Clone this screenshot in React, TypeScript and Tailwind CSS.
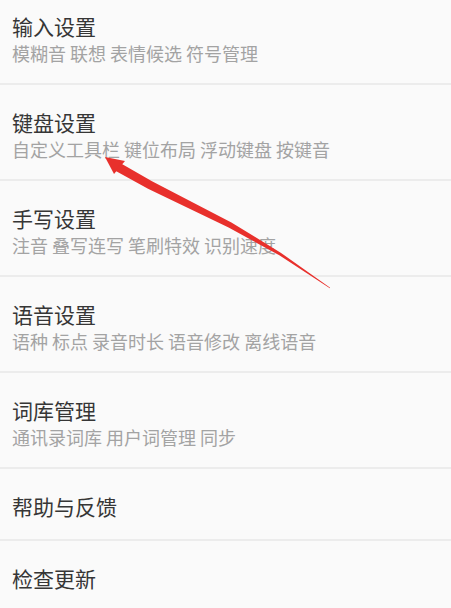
import React from "react";

type Item = { title: string; sub?: string };

const items: Item[] = [
  { title: "输入设置", sub: "模糊音 联想 表情候选 符号管理" },
  { title: "键盘设置", sub: "自定义工具栏 键位布局 浮动键盘 按键音" },
  { title: "手写设置", sub: "注音 叠写连写 笔刷特效 识别速度" },
  { title: "语音设置", sub: "语种 标点 录音时长 语音修改 离线语音" },
  { title: "词库管理", sub: "通讯录词库 用户词管理 同步" },
  { title: "帮助与反馈" },
  { title: "检查更新" },
];

function Row({ item }: { item: Item }) {
  return (
    <div
      className={
        "border-b-2 border-[#ececec] px-3 pt-[23px] " +
        (item.sub ? "h-[96px]" : "h-[72px]")
      }
    >
      <div className="text-[21px] leading-[28px] text-[#363636]">{item.title}</div>
      {item.sub && (
        <div className="text-[18px] leading-[27px] text-[#a3a3a3]">{item.sub}</div>
      )}
    </div>
  );
}

export default function App() {
  return (
    <main
      className="relative h-[608px] w-[451px] overflow-hidden bg-[#fafafa]"
      style={{ fontFamily: '"Noto Sans CJK SC", "Noto Sans", sans-serif' }}
    >
      <div className="-mt-[11px] flex flex-col">
        {items.map((it) => (
          <Row key={it.title} item={it} />
        ))}
      </div>

      {/* red annotation arrow */}
      <svg
        className="pointer-events-none absolute inset-0"
        width="451"
        height="608"
        viewBox="0 0 451 608"
      >
        <polygon points="105,157 125,161 114,174" fill="#e8302c" />
        <polygon
          points="120.2,163.1 152,181.3 231.4,222.4 280.7,252.7 330.15,287.75 329.85,288.25 279.3,255.3 228.6,227.6 148,188.7 115.8,170.9"
          fill="#e8302c"
        />
      </svg>
    </main>
  );
}
